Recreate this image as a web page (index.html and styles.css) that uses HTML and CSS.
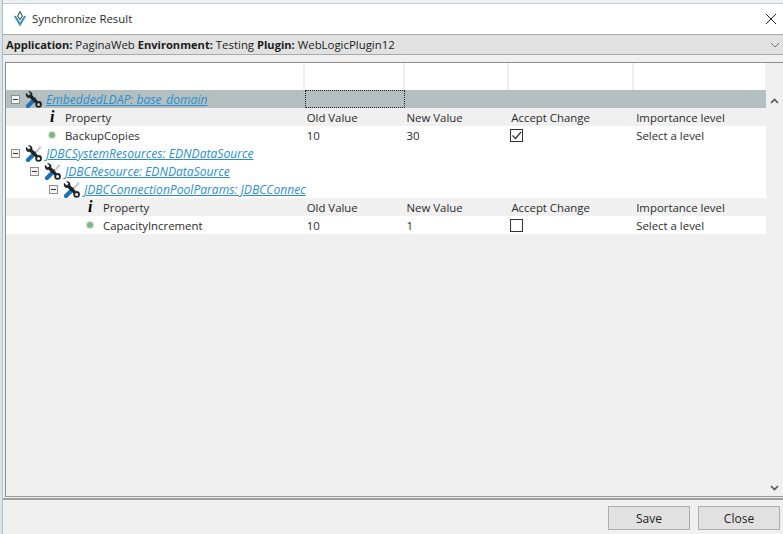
FILE: index.html
```html
<!DOCTYPE html>
<html lang="en">
<head>
    <meta charset="UTF-8">
    <title>Synchronize Result</title>
    <link rel="stylesheet" href="styles.css">
</head>
<body>
<svg class="defs" width="0" height="0">
    <symbol id="tools" viewBox="0 0 17 17">
        <path d="M11.5 6 L15 1.5 L16 2.5 L12 7" fill="#dfe3e8" stroke="#aab0ba" stroke-width="0.8"/>
        <path d="M11 6.5 L8.5 9" stroke="#6b7078" stroke-width="2"/>
        <path d="M8.5 9.5 L3 15" stroke="#1f6fb5" stroke-width="4.2" stroke-linecap="round"/>
        <path d="M1 1.8 L3.8 4.5 L5.6 2.8 L3 0.3 C6 -0.4 8 1.8 7.2 4.3 L13 10.2 L10.6 12.6 L4.6 6.8 C2.2 7.5 0.2 4.8 1 1.8 Z" fill="#1e242c"/>
        <circle cx="13.6" cy="13.4" r="2.4" fill="none" stroke="#1e242c" stroke-width="1.8"/>
    </symbol>
</svg>
<div class="window">
    <div class="titlebar">
        <svg class="logo" width="14" height="16" viewBox="0 0 14 16">
            <path d="M0.5 4.5 L7 15.5 L13.5 4.5 L10.5 5.5 L7 11.5 L3.5 5.5 Z" fill="#3d8fb0"/>
            <path d="M7 0.5 L9.3 5 L7 8.5 L4.7 5 Z" fill="none" stroke="#33566b" stroke-width="1.1"/>
        </svg>
        <span class="title">Synchronize Result</span>
        <svg class="close-x" width="12" height="12" viewBox="0 0 12 12">
            <path d="M1 1 L11 11 M11 1 L1 11" stroke="#222" stroke-width="1"/>
        </svg>
    </div>
    <div class="infobar">
        <span><b>Application:</b> PaginaWeb <b>Environment:</b> Testing <b>Plugin:</b> WebLogicPlugin12</span>
        <svg class="chev" width="10" height="6" viewBox="0 0 10 6">
            <path d="M1 1 L5 5 L9 1" fill="none" stroke="#777" stroke-width="1"/>
        </svg>
    </div>
    <div class="content">
        <div class="table">
            <div class="head">
                <div class="hcell c1"></div>
                <div class="hcell c2"></div>
                <div class="hcell c3"></div>
                <div class="hcell c4"></div>
                <div class="hcell hlast"></div>
                <div class="hspace"></div>
            </div>
            <div class="body">
                <div class="rows">
                    <div class="row selected">
                        <div class="cell c1 lvl0"><span class="toggle"></span><svg class="tools"><use href="#tools"/></svg><a class="node">EmbeddedLDAP: base_domain</a></div>
                        <div class="cell c2 focused"></div>
                    </div>
                    <div class="row grey">
                        <div class="cell c1 prop0"><i class="info">i</i>Property</div>
                        <div class="cell c2">Old Value</div>
                        <div class="cell c3">New Value</div>
                        <div class="cell c4">Accept Change</div>
                        <div class="cell c5">Importance level</div>
                    </div>
                    <div class="row">
                        <div class="cell c1 prop0"><span class="dot"></span>BackupCopies</div>
                        <div class="cell c2">10</div>
                        <div class="cell c3">30</div>
                        <div class="cell c4"><span class="check">
                            <svg width="11" height="11" viewBox="0 0 11 11"><path d="M1.5 5.5 L4.5 8.5 L10 2" fill="none" stroke="#333" stroke-width="1.2"/></svg>
                        </span></div>
                        <div class="cell c5">Select a level</div>
                    </div>
                    <div class="row">
                        <div class="cell c1 lvl0"><span class="toggle"></span><svg class="tools"><use href="#tools"/></svg><a class="node">JDBCSystemResources: EDNDataSource</a></div>
                    </div>
                    <div class="row">
                        <div class="cell c1 lvl1"><span class="toggle"></span><svg class="tools"><use href="#tools"/></svg><a class="node">JDBCResource: EDNDataSource</a></div>
                    </div>
                    <div class="row">
                        <div class="cell c1 lvl2"><span class="toggle"></span><svg class="tools"><use href="#tools"/></svg><a class="node">JDBCConnectionPoolParams: JDBCConnec</a></div>
                    </div>
                    <div class="row grey">
                        <div class="cell c1 prop1"><i class="info">i</i>Property</div>
                        <div class="cell c2">Old Value</div>
                        <div class="cell c3">New Value</div>
                        <div class="cell c4">Accept Change</div>
                        <div class="cell c5">Importance level</div>
                    </div>
                    <div class="row">
                        <div class="cell c1 prop1"><span class="dot"></span>CapacityIncrement</div>
                        <div class="cell c2">10</div>
                        <div class="cell c3">1</div>
                        <div class="cell c4"><span class="check"></span></div>
                        <div class="cell c5">Select a level</div>
                    </div>
                </div>
                <div class="scrollbar">
                    <svg width="9" height="6" viewBox="0 0 9 6"><path d="M1 5 L4.5 1.5 L8 5" fill="none" stroke="#555" stroke-width="1.6"/></svg>
                    <svg width="9" height="6" viewBox="0 0 9 6"><path d="M1 1 L4.5 4.5 L8 1" fill="none" stroke="#555" stroke-width="1.6"/></svg>
                </div>
            </div>
        </div>
    </div>
    <div class="footer">
        <button class="btn">Save</button>
        <button class="btn">Close</button>
    </div>
</div>
</body>
</html>
```

FILE: styles.css
```css
* {
    margin: 0;
    padding: 0;
    box-sizing: border-box;
}

html, body {
    height: 100%;
    overflow: hidden;
}

body {
    background-color: #dfe3e6;
    font-family: "Open Sans", "Noto Sans", sans-serif;
    font-size: 11.4px;
    color: #2b2b2b;
}

.defs {
    display: block;
}

.window {
    height: 534px;
    margin-left: 2px;
    padding-top: 3px;
    display: flex;
    flex-direction: column;
    border-left: 1px solid #a3c4cf;
    background-color: #f0f0f0;
}

.titlebar {
    height: 31px;
    flex: none;
    display: flex;
    align-items: center;
    padding: 0 6px 0 10px;
    background-color: #fff;
    border-top: 1px solid #b9d3de;
}

.logo {
    margin-right: 5px;
}

.title {
    flex: 1;
    margin-bottom: 2px;
}

.infobar {
    height: 21px;
    flex: none;
    display: flex;
    align-items: center;
    justify-content: space-between;
    padding: 0 3px;
    background-color: #e1e1e1;
    border-top: 1px solid #a9a9a9;
    border-bottom: 1px solid #a9a9a9;
    color: #1c1c1c;
}

.infobar b {
    font-size: 11.1px;
}

.content {
    flex: 1;
    min-height: 0;
    padding: 7px 0 1px 2px;
}

.table {
    height: 100%;
    display: flex;
    flex-direction: column;
    border-top: 1px solid #8c8c8c;
    border-left: 1px solid #8c8c8c;
    border-bottom: 1px solid #9a9a9a;
}

.head {
    height: 27px;
    flex: none;
    display: flex;
    background-color: #fff;
}

.hcell {
    border-right: 2px solid #eeeeee;
}

.hlast {
    flex: 1;
    border-right: 0;
}

.hspace {
    width: 18px;
    background-color: #f0f0f0;
}

.body {
    flex: 1;
    display: flex;
    min-height: 0;
}

.rows {
    flex: 1;
    min-width: 0;
}

.row {
    height: 18px;
    display: flex;
    background-color: #fff;
}

.row.selected {
    background-color: #b4bfc0;
}

.row.grey {
    background-color: #f0f0f0;
}

.cell {
    height: 18px;
    display: flex;
    align-items: center;
    padding-left: 3px;
    white-space: nowrap;
}

.c1 { width: 299px; }
.c2 { width: 100px; }
.c3 { width: 104px; }
.c4 { width: 125px; }
.c5 { width: 133px; }

.row .c2,
.row .c3 {
    padding-left: 2px;
}

.lvl0 { padding-left: 5px; }
.lvl1 { padding-left: 24px; }
.lvl2 { padding-left: 43px; }
.prop0 { padding-left: 40px; }
.prop1 { padding-left: 78px; }

.row .focused {
    border: 1px dotted #222;
}

.toggle {
    width: 9px;
    height: 9px;
    flex: none;
    position: relative;
    margin-right: 5px;
    border: 1px solid #8d8d8d;
    background-color: #f4f4f4;
}

.toggle::after {
    content: "";
    position: absolute;
    left: 1px;
    top: 3px;
    width: 5px;
    height: 1px;
    background-color: #333;
}

.tools {
    width: 17px;
    height: 17px;
    flex: none;
    margin-right: 4px;
}

.node {
    font-size: 12.1px;
    color: #2a8fd0;
    font-style: italic;
    text-decoration: underline;
}

.info {
    width: 19px;
    flex: none;
    font-family: "Liberation Serif", serif;
    font-size: 16px;
    font-weight: bold;
    color: #000;
    padding-left: 4px;
}

.dot {
    width: 6px;
    height: 6px;
    flex: none;
    margin: 0 10px 0 3px;
    border-radius: 50%;
    background-color: #7fb783;
    box-shadow: 0 0 1px 1px #d3e4d4;
}

.check {
    width: 13px;
    height: 13px;
    display: flex;
    align-items: center;
    justify-content: center;
    margin-left: -1px;
    border: 1px solid #333;
    background-color: #fff;
}

.scrollbar {
    width: 17px;
    flex: none;
    display: flex;
    flex-direction: column;
    align-items: center;
    justify-content: space-between;
    padding: 8px 0 5px;
    background-color: #f0f0f0;
}

.footer {
    height: 36px;
    flex: none;
    display: flex;
    justify-content: flex-end;
    align-items: center;
    gap: 8px;
    padding: 2px 3px 0 0;
    border-top: 2px solid #a0a0a0;
    background-color: #f0f0f0;
}

.btn {
    width: 82px;
    height: 24px;
    font-family: inherit;
    font-size: 12px;
    color: #222;
    background-color: #e1e1e1;
    border: 1px solid #adadad;
}
```
